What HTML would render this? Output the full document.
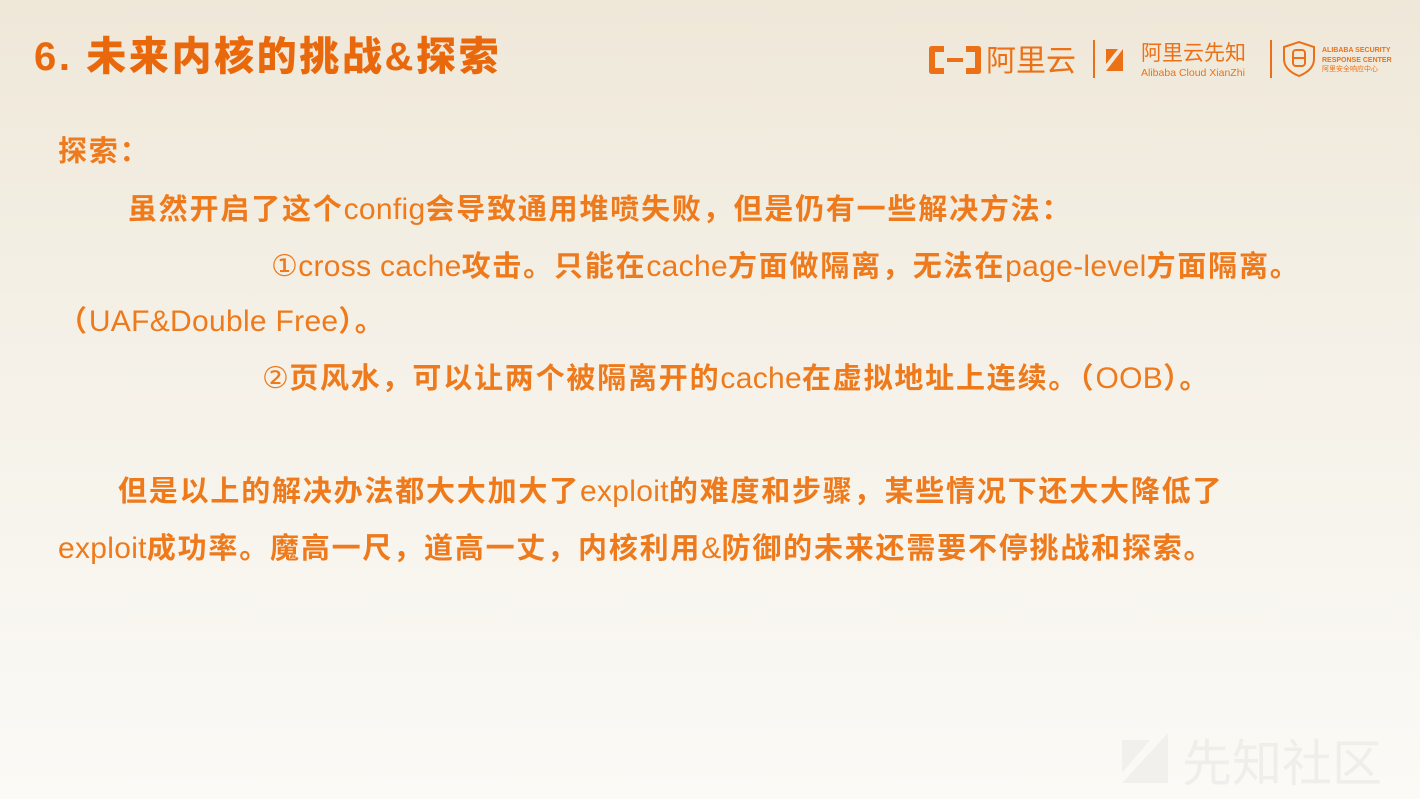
<!DOCTYPE html>
<html><head><meta charset="utf-8"><style>
html,body{margin:0;padding:0}
body{width:1420px;height:799px;overflow:hidden;position:relative;background:linear-gradient(180deg,#efe8d9 0%,#f5f1e8 45%,#fbfaf6 100%);font-family:"Noto Sans CJK SC",sans-serif;color:#ee7a1c}
.t{position:absolute;white-space:nowrap;font-size:29px;font-weight:bold;line-height:34px;font-family:"Noto Sans CJK SC",sans-serif;letter-spacing:1.8px}
.t i{font-style:normal;font-weight:normal;font-family:"Liberation Sans",sans-serif;font-size:30px;letter-spacing:0.3px}
h1{position:absolute;left:34px;top:27px;margin:0;font-size:40px;line-height:52px;color:#e9680c;font-weight:900;font-family:"Noto Sans CJK SC",sans-serif;letter-spacing:2.6px}
h1 i{font-style:normal;font-family:"Liberation Sans",sans-serif;font-weight:bold}
</style></head><body>
<h1><i>6. </i>未来内核的挑战<i>&amp;</i>探索</h1>

<svg style="position:absolute;left:928px;top:38px" width="470" height="42" viewBox="0 0 470 42">
 <g fill="#ec7116">
  <path d="M4 8h12v6h-9v16h9v6H4q-3 0-3-3V11q0-3 3-3z"/>
  <path d="M50 8H38v6h9v16h-9v6h12q3 0 3-3V11q0-3-3-3z"/>
  <rect x="19" y="20" width="16" height="4"/>
  <rect x="165" y="2" width="2" height="38"/>
  <polygon points="178,33 195,11 195,33"/>
  <polygon points="178,11 190,11 178,26"/>
  <rect x="342" y="2" width="2" height="38"/>
  <path d="M356 9l15-5 15 5v12q0 11-15 17q-15-6-15-17z" fill="none" stroke="#ec7116" stroke-width="2"/>
  <rect x="365" y="12" width="12" height="16" rx="3" fill="none" stroke="#ec7116" stroke-width="2"/>
  <rect x="365" y="19" width="12" height="2"/>
 </g>
 <text x="58" y="33" font-size="30" fill="#ec7116" font-family="Noto Sans CJK SC,sans-serif">阿里云</text>
 <text x="213" y="22" font-size="21" fill="#ec7116" font-family="Noto Sans CJK SC,sans-serif">阿里云先知</text>
 <text x="213" y="38" font-size="10.5" fill="#ec7116" font-family="Liberation Sans,sans-serif">Alibaba Cloud XianZhi</text>
 <text x="394" y="14" font-size="7" fill="#ec7116" font-family="Liberation Sans,sans-serif" font-weight="bold">ALIBABA SECURITY</text>
 <text x="394" y="24" font-size="7" fill="#ec7116" font-family="Liberation Sans,sans-serif" font-weight="bold">RESPONSE CENTER</text>
 <text x="394" y="33" font-size="7" fill="#ec7116" font-family="Noto Sans CJK SC,sans-serif">阿里安全响应中心</text>
</svg>

<div class="t" style="left:58px;top:132px">探索：</div>
<div class="t" style="left:128px;top:190px">虽然开启了这个<i>config</i>会导致通用堆喷失败，但是仍有一些解决方法：</div>
<div class="t" style="left:271px;top:247px"><i>①cross cache</i>攻击。只能在<i>cache</i>方面做隔离，无法在<i>page-level</i>方面隔离。</div>
<div class="t" style="left:58px;top:302px">（<i>UAF&amp;Double Free</i>）。</div>
<div class="t" style="left:262px;top:359px"><i>②</i>页风水，可以让两个被隔离开的<i>cache</i>在虚拟地址上连续。（<i>OOB</i>）。</div>
<div class="t" style="left:118px;top:472px">但是以上的解决办法都大大加大了<i>exploit</i>的难度和步骤，某些情况下还大大降低了</div>
<div class="t" style="left:58px;top:529px"><i>exploit</i>成功率。魔高一尺，道高一丈，内核利用<i>&amp;</i>防御的未来还需要不停挑战和探索。</div>

<svg style="position:absolute;left:1110px;top:725px" width="300" height="70">
 <polygon points="12,58 58,8 58,58" fill="#f1f0ec"/>
 <polygon points="12,15 40,15 12,48" fill="#f1f0ec"/>
 <text x="72" y="56" font-size="50" fill="#efeeea" font-family="Noto Sans CJK SC,sans-serif">先知社区</text>
</svg>
</body></html>
